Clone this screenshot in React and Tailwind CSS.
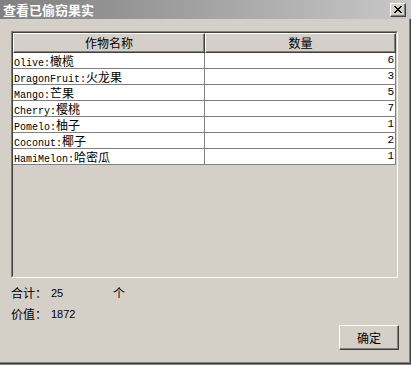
const rows = [
  ["Olive:", "橄榄", 6],
  ["DragonFruit:", "火龙果", 3],
  ["Mango:", "芒果", 5],
  ["Cherry:", "樱桃", 7],
  ["Pomelo:", "柚子", 1],
  ["Coconut:", "椰子", 2],
  ["HamiMelon:", "哈密瓜", 1],
];

const cjk = { fontFamily: '"Noto Sans CJK SC", "Liberation Sans", sans-serif' };
const mono = { fontFamily: '"Liberation Mono", monospace' };

function HeaderCell({ children }) {
  return (
    <div className="h-[20px] bg-[#d4d0c8] border-t border-l border-t-white border-l-white shadow-[inset_-1px_-1px_#808080] border-r border-b border-r-[#404040] border-b-[#404040] flex items-center justify-center text-[12px] text-black">
      {children}
    </div>
  );
}

export default function App() {
  return (
    <div className="w-[411px] h-[365px] bg-[#d4d0c8] relative overflow-hidden" style={cjk}>
      <div className="h-[364px] shadow-[inset_-1px_-1px_#404040,inset_-2px_-2px_#808080] flex flex-col">
        {/* title bar */}
        <div className="h-[19px] bg-gradient-to-r from-[#808080] to-[#c8c8c8] flex items-center justify-between pl-[3px] pr-[5px]">
          <span className="text-white font-bold text-[13px] leading-none">查看已偷窃果实</span>
          <button className="w-[16px] h-[14px] bg-[#d4d0c8] border-t border-l border-white border-r border-b border-r-[#404040] border-b-[#404040] shadow-[inset_-1px_-1px_#808080] flex items-center justify-center">
            <svg width="8" height="7" viewBox="0 0 8 7">
              <path d="M0 0L7 7M1 0L8 7M7 0L0 7M8 0L1 7" stroke="black" strokeWidth="1" />
            </svg>
          </button>
        </div>

        {/* table frame */}
        <div className="ml-[11px] mt-[12px] w-[387px] h-[247px] border-t border-l border-t-[#808080] border-l-[#808080] border-r border-b border-r-white border-b-white">
          <div className="w-full h-full border-t border-l border-t-[#404040] border-l-[#404040] border-r border-b border-r-[#d4d0c8] border-b-[#d4d0c8]">
            <div className="grid grid-cols-[192px_191px]">
              <HeaderCell>作物名称</HeaderCell>
              <HeaderCell>数量</HeaderCell>
              {rows.map(([en, zh, n]) => (
                <div key={en} className="contents">
                  <div className="h-[16px] bg-white border-r border-b border-[#808080] text-[12px] leading-[15px] pl-[1px] text-black whitespace-nowrap overflow-hidden">
                    <span className="text-[10px]" style={mono}>{en}</span>
                    <span>{zh}</span>
                  </div>
                  <div className="h-[16px] bg-white border-r border-b border-[#808080] text-right pr-[1px] text-[11px] leading-[15px] text-black" style={mono}>
                    {n}
                  </div>
                </div>
              ))}
            </div>
          </div>
        </div>

        {/* totals */}
        <div className="mt-[8px] ml-[11px] h-[14px] flex items-center text-[12px] text-black leading-none">
          <span className="w-[40px]">合计：</span>
          <span className="w-[62px] text-[11px]" style={{ fontFamily: '"Liberation Sans", sans-serif' }}>25</span>
          <span>个</span>
        </div>
        <div className="mt-[7px] ml-[11px] h-[14px] flex items-center text-[12px] text-black leading-none">
          <span className="w-[40px]">价值：</span>
          <span className="text-[11px]" style={{ fontFamily: '"Liberation Sans", sans-serif' }}>1872</span>
        </div>

        <div className="flex justify-end pr-[12px] mt-[4px]">
          <button className="w-[60px] h-[25px] bg-[#d4d0c8] border-t border-l border-white border-r border-b border-r-[#404040] border-b-[#404040] shadow-[inset_-1px_-1px_#808080] text-[12px] text-black flex items-center justify-center">
            确定
          </button>
        </div>
      </div>
      <div className="h-[1px] bg-[#808080]" />
    </div>
  );
}
